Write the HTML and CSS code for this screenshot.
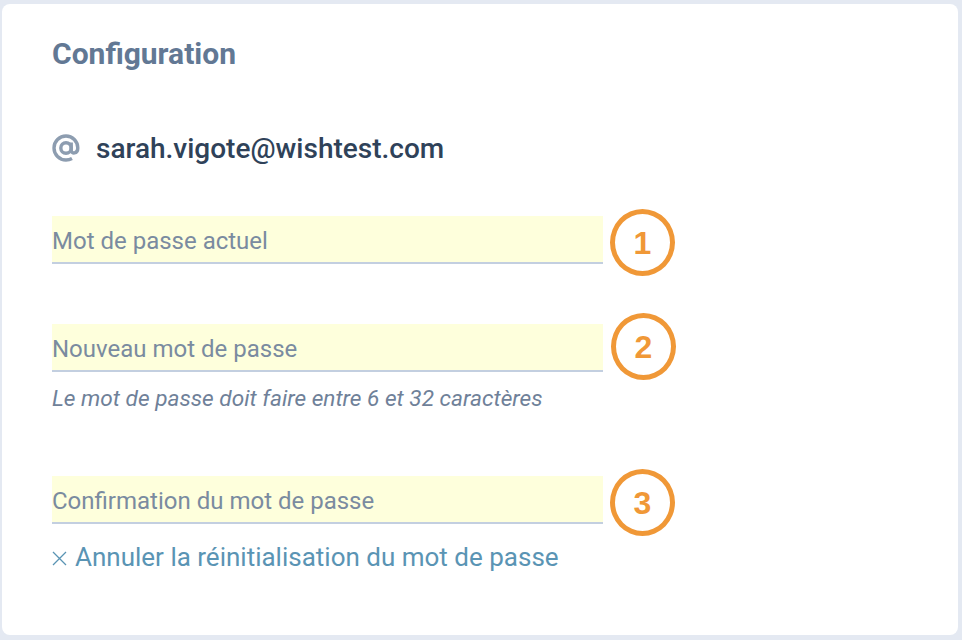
FILE: index.html
```html
<!DOCTYPE html>
<html lang="fr">
<head>
    <meta charset="UTF-8">
    <title>Configuration</title>
    <link rel="stylesheet" href="styles.css">
</head>
<body>
    <main class="card">
        <h2 class="title">Configuration</h2>
        <div class="email">
            <svg class="email-icon" viewBox="0 0 28 28" width="28" height="28" aria-hidden="true">
                <circle cx="14" cy="14" r="5.2" fill="none" stroke="#8d9db0" stroke-width="3.4"/>
                <path d="M19.2 8.6v7.6c0 4 6.6 4 6.6-2.2C25.8 7.2 20.5 2 14 2 7.400 2 2 7.400 2 14s5.400 12 12 12c2.400 0 4.200-.5 6-1.500" fill="none" stroke="#8d9db0" stroke-width="3.400"/>
            </svg>
            <span>sarah.vigote@wishtest.com</span>
        </div>

        <div class="field field-first">
            <input class="input" type="password" placeholder="Mot de passe actuel">
            <span class="step">1</span>
        </div>
        <div class="field field-second">
            <input class="input" type="password" placeholder="Nouveau mot de passe">
            <span class="step step-wide">2</span>
        </div>
        <p class="hint">Le mot de passe doit faire entre 6 et 32 caractères</p>
        <div class="field field-third">
            <input class="input" type="password" placeholder="Confirmation du mot de passe">
            <span class="step">3</span>
        </div>
        <a class="cancel" href="#">
            <svg class="cancel-icon" viewBox="0 0 15 15" width="15" height="15" aria-hidden="true">
                <path d="M1 1l13 13M14 1L1 14" stroke="#5a94b4" stroke-width="1.300" fill="none"/>
            </svg>
            Annuler la réinitialisation du mot de passe
        </a>
    </main>
</body>
</html>
```

FILE: styles.css
```css
html, body {
    height: 100%;
}

body {
    margin: 0;
    padding: 4px 4px 5px 2px;
    box-sizing: border-box;
    background-color: #e4e9f2;
    font-family: Roboto, Arial, sans-serif;
    overflow: hidden;
}

.card {
    height: 100%;
    box-sizing: border-box;
    padding: 33px 50px 0;
    background-color: #fff;
    border-radius: 8px;
}

.title {
    margin: 0;
    font-size: 30px;
    line-height: 34px;
    font-weight: 700;
    color: #627894;
}

.email {
    display: flex;
    align-items: center;
    gap: 16px;
    margin-top: 59px;
    height: 36px;
    font-size: 28px;
    font-weight: 500;
    color: #2f4259;
}

.email-icon {
    flex: none;
    margin-top: -1px;
}

.field {
    position: relative;
    width: 551px;
}

.field-first {
    margin-top: 50px;
}

.field-second {
    margin-top: 60px;
}

.field-third {
    margin-top: 64px;
}

.input {
    display: block;
    width: 100%;
    height: 48px;
    box-sizing: border-box;
    padding: 4px 0 0;
    border: none;
    border-bottom: 2px solid #c3cfe0;
    border-radius: 0;
    outline: none;
    background-color: #feffdc;
    font-family: inherit;
    font-size: 24px;
    color: #2f4259;
}

.input::placeholder {
    color: #7a8ba0;
    opacity: 1;
}

/* annotation rings drawn on top of the screenshot */
.step {
    position: absolute;
    left: 558px;
    top: -7px;
    width: 65px;
    height: 67px;
    box-sizing: border-box;
    display: flex;
    align-items: center;
    justify-content: center;
    padding-top: 1px;
    border: 5px solid #f09837;
    border-radius: 50%;
    font-family: "Liberation Sans", Arial, sans-serif;
    font-size: 32px;
    font-weight: 700;
    color: #f09837;
}

.step-wide {
    left: 559px;
    top: -11px;
}

.hint {
    margin: 14px 0 0;
    height: 26px;
    font-size: 22.65px;
    line-height: 26px;
    font-style: italic;
    color: #6f8199;
}

.cancel {
    display: flex;
    align-items: center;
    gap: 8px;
    margin-top: 17px;
    height: 32px;
    font-size: 26px;
    color: #5a94b4;
    text-decoration: none;
}

.cancel-icon {
    flex: none;
    margin-top: 3px;
}
```
